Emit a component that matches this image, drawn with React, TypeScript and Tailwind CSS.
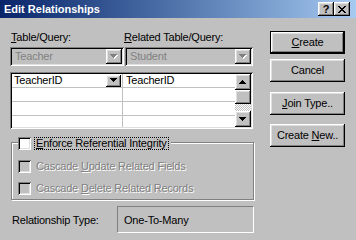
import React from "react";

const RAISED =
  "shadow-[inset_-1px_-1px_#000,inset_1px_1px_#fff,inset_-2px_-2px_#808080,inset_2px_2px_#dfdfdf]";
const SUNKEN =
  "shadow-[inset_1px_1px_#808080,inset_-1px_-1px_#fff,inset_2px_2px_#000,inset_-2px_-2px_#dfdfdf]";
const DIS = "text-[#808080] [text-shadow:1px_1px_0_#fff]";

function Arrow({
  dir = "down",
  color = "#000",
  shadow,
}: {
  dir?: "up" | "down";
  color?: string;
  shadow?: string;
}) {
  const rows = [7, 5, 3, 1];
  const r = dir === "down" ? rows : [...rows].reverse();
  return (
    <svg width="8" height="5" viewBox="0 0 8 5" shapeRendering="crispEdges">
      {shadow &&
        r.map((w, i) => (
          <rect key={"s" + i} x={(7 - w) / 2 + 1} y={i + 1} width={w} height={1} fill={shadow} />
        ))}
      {r.map((w, i) => (
        <rect key={i} x={(7 - w) / 2} y={i} width={w} height={1} fill={color} />
      ))}
    </svg>
  );
}

function CloseGlyph() {
  const px: [number, number][] = [];
  const rows = [
    "xx....xx",
    ".xx..xx.",
    "..xxxx..",
    "...xx...",
    "..xxxx..",
    ".xx..xx.",
    "xx....xx",
  ];
  rows.forEach((row, y) =>
    row.split("").forEach((c, x) => {
      if (c === "x") px.push([x, y]);
    })
  );
  return (
    <svg width="8" height="7" viewBox="0 0 8 7" shapeRendering="crispEdges">
      {px.map(([x, y], i) => (
        <rect key={i} x={x} y={y} width={1} height={1} fill="#000" />
      ))}
    </svg>
  );
}

function Combo({ w, text }: { w: string; text: string }) {
  return (
    <div className={`flex h-[19px] ${w} p-[2px] bg-[#c0c0c0] ${SUNKEN}`}>
      <div className="flex-1 pl-[3px] leading-[15px] text-[#808080]">{text}</div>
      <div className={`w-[16px] h-[15px] flex items-center justify-center bg-[#c0c0c0] ${RAISED}`}>
        <Arrow color="#808080" shadow="#fff" />
      </div>
    </div>
  );
}

function Check({ disabled }: { disabled?: boolean }) {
  return (
    <div
      className={`w-[13px] h-[13px] shrink-0 ${SUNKEN} ${disabled ? "bg-[#c0c0c0]" : "bg-white"}`}
    />
  );
}

function Btn({ children, def, mt }: { children: React.ReactNode; def?: boolean; mt: string }) {
  return (
    <div className={`${mt} h-[23px] w-[75px] bg-[#c0c0c0] ${def ? "border border-black" : ""}`}>
      <div className={`h-full w-full flex items-center justify-center ${RAISED}`}>{children}</div>
    </div>
  );
}

export default function App() {
  const rows = [0, 1, 2, 3];
  return (
    <div className="w-[356px] h-[240px] bg-[#c0c0c0] flex flex-col overflow-hidden font-['Liberation_Sans',Arial,sans-serif] text-[11px] leading-[13px] tracking-[-0.2px] text-black">
      {/* Title bar */}
      <div className="h-[18px] shrink-0 flex items-center pl-[4px] pr-[6px] bg-linear-to-r from-[#0a246a] to-[#a6caf0]">
        <div className="flex-1 text-white font-bold tracking-normal pt-[1px]">Edit Relationships</div>
        <div className="flex">
          <div className={`w-[16px] h-[14px] bg-[#c0c0c0] flex items-center justify-center font-bold tracking-normal leading-[12px] ${RAISED}`}>
            ?
          </div>
          <div className={`w-[16px] h-[14px] bg-[#c0c0c0] flex items-center justify-center ${RAISED}`}>
            <CloseGlyph />
          </div>
        </div>
      </div>

      {/* Body */}
      <div className="flex flex-1">
        {/* Left column */}
        <div className="flex flex-col pl-[10px] pt-[13px] w-[255px]">
          <div className="flex h-[13px]">
            <div className="w-[114px] pl-[1px]">
              <u>T</u>able/Query:
            </div>
            <div>
              <u>R</u>elated Table/Query:
            </div>
          </div>

          <div className="mt-[3px] flex gap-[1px]">
            <Combo w="w-[114px]" text="Teacher" />
            <Combo w="w-[128px]" text="Student" />
          </div>

          {/* Grid */}
          <div className={`mt-[6px] w-[243px] h-[57px] p-[2px] bg-white flex ${SUNKEN}`}>
            <div className="flex-1 flex flex-col overflow-hidden">
              {rows.map((r) => (
                <div
                  key={r}
                  className={`flex shrink-0 ${r < 3 ? "h-[14px] border-b border-[#c0c0c0]" : "h-[11px]"}`}
                >
                  <div className="w-[111px] border-r border-[#c0c0c0] flex items-center">
                    {r === 0 && (
                      <>
                        <div className="flex-1 pl-[2px]">TeacherID</div>
                        <div className={`w-[15px] h-[12px] mr-[1px] flex items-center justify-center bg-[#c0c0c0] ${RAISED}`}>
                          <Arrow />
                        </div>
                      </>
                    )}
                  </div>
                  <div className="flex-1 pl-[3px]">{r === 0 ? "TeacherID" : ""}</div>
                </div>
              ))}
            </div>
            <div className="w-[16px] flex flex-col">
              <div className={`h-[16px] bg-[#c0c0c0] flex items-center justify-center ${RAISED}`}>
                <Arrow dir="up" />
              </div>
              <div className={`h-[14px] bg-[#c0c0c0] ${RAISED}`} />
              <div className="h-[7px] bg-[repeating-conic-gradient(#c0c0c0_0%_25%,#ffffff_0%_50%)] bg-[length:2px_2px]" />
              <div className={`h-[16px] bg-[#c0c0c0] flex items-center justify-center ${RAISED}`}>
                <Arrow />
              </div>
            </div>
          </div>

          {/* Group box */}
          <div className="mt-[13px] ml-[1px] w-[243px] border border-[#808080] shadow-[inset_1px_1px_#fff,1px_1px_#fff] flex flex-col pl-[6px] pb-[4px]">
            <div className="-mt-[6px] self-start flex items-center gap-[3px] bg-[#c0c0c0] pr-[2px]">
              <Check />
              <div className="h-[13px] border border-dotted border-black leading-[11px] px-[1px]">
                <u>E</u>nforce Referential Integrity
              </div>
            </div>
            <div className="mt-[10px] flex items-center gap-[5px]">
              <Check disabled />
              <div className={DIS}>
                Cascade <u>U</u>pdate Related Fields
              </div>
            </div>
            <div className="mt-[9px] flex items-center gap-[5px]">
              <Check disabled />
              <div className={DIS}>
                Cascade <u>D</u>elete Related Records
              </div>
            </div>
          </div>

          {/* Relationship type */}
          <div className="mt-[6px] flex h-[27px] items-center">
            <div className="w-[107px] pl-[2px] pt-[1px]">Relationship Type:</div>
            <div className="w-[137px] h-full border-t border-l border-t-[#808080] border-l-[#808080] border-b border-r border-b-white border-r-white pl-[6px] pt-[1px] flex items-center">
              One-To-Many
            </div>
          </div>
        </div>

        {/* Right column */}
        <div className="flex flex-col pt-[13px] ml-[15px] w-[75px]">
          <Btn def mt="mt-0">
            <span>
              <u>C</u>reate
            </span>
          </Btn>
          <Btn mt="mt-[5px]">Cancel</Btn>
          <Btn mt="mt-[10px]">
            <span>
              <u>J</u>oin Type..
            </span>
          </Btn>
          <Btn mt="mt-[9px]">
            <span>
              Create <u>N</u>ew..
            </span>
          </Btn>
        </div>
      </div>
    </div>
  );
}
